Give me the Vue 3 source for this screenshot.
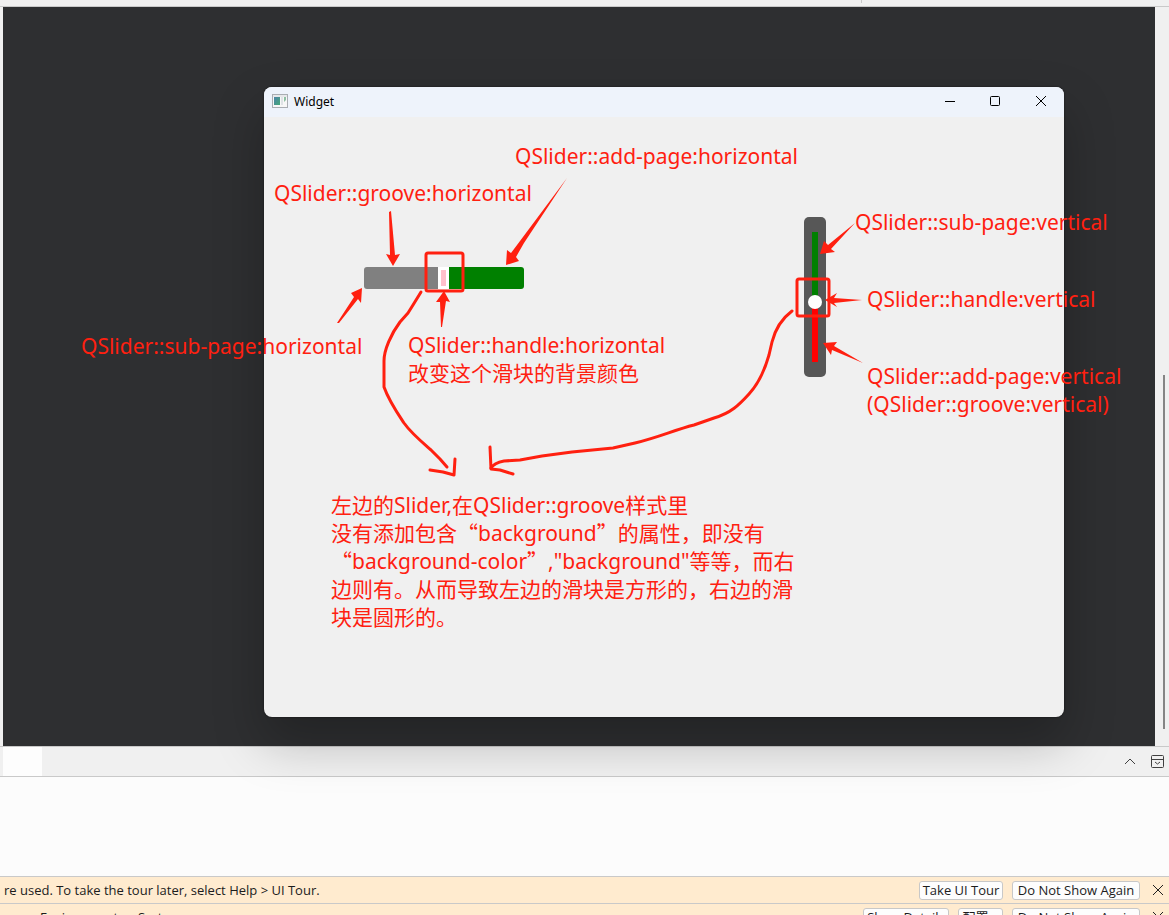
<script setup>
import { ref } from 'vue'

const horizontalValue = ref(74)
const verticalValue = ref(54)

const arrows = [
  'M389 212L391 211L395 255L400 254L393 266L386 254L390 255Z',
  'M567 178L520 241L511 253L507 250L506 265L519 261L516 257L524 243Z',
  'M337 323L354 297L351 293L362 288L361 303L358 299L339 323Z',
  'M441 327L440 302L436 302L444 291L450 302L446 301L442 327Z',
  'M855 223L828 245L824 241L820 254L835 252L831 249Z',
  'M862 300L834 303L837 307L825 300L837 293L834 298Z',
  'M863 363L834 346L837 342L823 343L831 355L832 350Z'
]
</script>

<template>
  <main class="screen">
    <div class="top-strip"></div>

    <section class="workspace">
      <div class="stage">
        <div class="window">
          <header class="titlebar">
            <svg class="app-icon" width="16" height="14" viewBox="0 0 16 14" aria-hidden="true">
              <defs>
                <linearGradient id="iconFill" x1="0" y1="0" x2="1" y2="1">
                  <stop offset="0" stop-color="#4e83a8" />
                  <stop offset="1" stop-color="#43a878" />
                </linearGradient>
              </defs>
              <rect x="0.5" y="0.5" width="15" height="13" fill="#f7f7f7" stroke="#a9adb2" />
              <path d="M1 2H15" stroke="#d5d8dc" />
              <rect x="2" y="3" width="6" height="8" fill="url(#iconFill)" />
              <rect x="9" y="3" width="2" height="8" fill="#dfe3e6" />
              <path d="M12 3H14V6L12 8Z" fill="#8dc0a2" />
            </svg>
            <span class="title">Widget</span>
            <div class="window-buttons">
              <button type="button" aria-label="Minimize">
                <svg width="12" height="12" viewBox="0 0 12 12"><path d="M2 6.5H12" /></svg>
              </button>
              <button type="button" aria-label="Maximize">
                <svg width="12" height="12" viewBox="0 0 12 12"><rect x="1.5" y="1.5" width="9" height="9" rx="1" /></svg>
              </button>
              <button type="button" aria-label="Close">
                <svg width="12" height="12" viewBox="0 0 12 12"><path d="M1 1L11 11M11 1L1 11" /></svg>
              </button>
            </div>
          </header>
          <div class="client">
            <input v-model="horizontalValue" class="slider-h" type="range" max="149" aria-label="QSlider horizontal" />
            <input v-model="verticalValue" class="slider-v" type="range" aria-label="QSlider vertical" />
          </div>
        </div>
      </div>
      <div class="gutter"><div class="scroll-thumb"></div></div>

      <svg class="ink" width="1169" height="739" viewBox="0 7 1169 739" aria-hidden="true">
        <path v-for="d in arrows" :key="d" :d="d" fill="#ff2010" />
        <g fill="none" stroke="#ff2010" stroke-width="3" stroke-linejoin="round">
          <rect x="426" y="253" width="37" height="38" rx="2" />
          <rect x="797" y="279" width="32" height="37" rx="2" />
          <g stroke-linecap="round">
            <path d="M421 292L413 305L408 313L400 322C391 334 384 350 384 361V387C389 401 396 411 404 423C411 433 423 443 431 450L440 459L447 467" />
            <path d="M430 470L443 472L454 475L455 459" />
            <path d="M792 311C780 320 775 330 772 342L769 355C765 369 760 382 749 394C739 405 731 413 714 418L694 425C674 430 660 437 635 443L613 448L572 452L542 456L520 460L504 461Q494 463 491 468" />
            <path d="M490 447L491 469L500 470L513 474" />
          </g>
        </g>
      </svg>

      <p class="note add-h">QSlider::add-page:horizontal</p>
      <p class="note groove-h">QSlider::groove:horizontal</p>
      <p class="note sub-h">QSlider::sub-page:horizontal</p>
      <p class="note handle-h">QSlider::handle:horizontal<br />改变这个滑块的背景颜色</p>
      <p class="note sub-v">QSlider::sub-page:vertical</p>
      <p class="note handle-v">QSlider::handle:vertical</p>
      <p class="note add-v">QSlider::add-page:vertical<br />(QSlider::groove:vertical)</p>
      <p class="note remark" lang="zh-CN">左边的Slider,在QSlider::groove样式里<br />没有添加包含<span class="cjk">“</span>background<span class="cjk">”</span>的属性，即没有<br /><span class="cjk">“</span>background-color<span class="cjk">”</span>,"background"等等，而右<br />边则有。从而导致左边的滑块是方形的，右边的滑<br />块是圆形的。</p>
    </section>

    <div class="pane-bar">
      <div class="pane-tab"></div>
      <button type="button" aria-label="Expand">
        <svg width="12" height="8" viewBox="0 0 12 8"><path d="M1 6L6 1L11 6" /></svg>
      </button>
      <button type="button" aria-label="Toggle pane">
        <svg width="14" height="14" viewBox="0 0 14 14"><rect x="0.5" y="0.5" width="12" height="12" rx="1" /><path d="M1 4.500H12M4 7L6.500 9L9 7" /></svg>
      </button>
    </div>
    <div class="pane"></div>

    <section class="alert">
      <p>re used. To take the tour later, select Help &gt; UI Tour.</p>
      <button class="push w-tour" type="button">Take UI Tour</button>
      <button class="push w-again" type="button">Do Not Show Again</button>
      <button class="dismiss" type="button" aria-label="Close">
        <svg width="12" height="12" viewBox="0 0 12 12"><path d="M1 1L11 11M11 1L1 11" /></svg>
      </button>
    </section>
    <section class="alert second">
      <p>Environment or System</p>
      <button class="push w-details" type="button">Show Details</button>
      <button class="push w-config" type="button">配置...</button>
      <button class="push w-again" type="button">Do Not Show Again</button>
      <button class="dismiss" type="button" aria-label="Close">
        <svg width="12" height="12" viewBox="0 0 12 12"><path d="M1 1L11 11M11 1L1 11" /></svg>
      </button>
    </section>
  </main>
</template>

<style>
body {
  margin: 0;
}
</style>

<style scoped>
.screen {
  height: 100vh;
  display: flex;
  flex-direction: column;
  overflow: hidden;
  background: #f0f0f0;
  color: #1c1c1c;
  font-family: "Noto Sans", "Noto Sans CJK SC", sans-serif;
  font-size: 12px;
}
p {
  margin: 0;
}
button {
  font: inherit;
  color: inherit;
  padding: 0;
  border: 0;
  background: none;
}
svg {
  display: block;
}
button svg {
  fill: none;
  stroke: #202020;
  stroke-width: 1;
}
.top-strip {
  flex: none;
  height: 6px;
  border-bottom: 1px solid #c9c9c9;
  background: linear-gradient(#c9c9c9, #c9c9c9) 861px 0 / 1px 3px no-repeat;
}
.workspace {
  position: relative;
  z-index: 1;
  flex: none;
  display: flex;
  padding-left: 3px;
}
.stage {
  flex: 1;
  padding: 80px 91px 29px 261px;
  background: #2e2f31;
}
.window {
  border-radius: 8px;
  background: #f0f0f0;
  box-shadow: 0 0 2px rgba(0, 0, 0, 0.6), 0 24px 50px rgba(0, 0, 0, 0.25);
}
.titlebar {
  display: flex;
  align-items: center;
  box-sizing: border-box;
  height: 30px;
  padding: 0 0 2px 8px;
  border-radius: 8px 8px 0 0;
  background: #eef3fb;
  color: #000;
}
.title {
  margin-left: 6px;
}
.window-buttons {
  display: flex;
  margin-left: auto;
}
.window-buttons button {
  display: grid;
  place-items: center;
  width: 46px;
  height: 28px;
}
.window-buttons svg {
  stroke: #000;
}
.client {
  display: flex;
  justify-content: space-between;
  align-items: flex-start;
  height: 500px;
  padding: 100px 238px 0 100px;
}
.slider-h,
.slider-v {
  appearance: none;
  box-sizing: border-box;
  margin: 0;
}
.slider-h {
  width: 160px;
  height: 22px;
  margin-top: 50px;
  border-radius: 3px;
  background: linear-gradient(90deg, #808080 50%, #008000 50%);
}
.slider-h::-webkit-slider-thumb {
  appearance: none;
  width: 11px;
  height: 22px;
  border: 3px solid #fff;
  background: #ffc0cb;
}
.slider-v {
  writing-mode: vertical-lr;
  width: 22px;
  height: 160px;
  padding: 15px 4px;
  border-radius: 5px;
  background: linear-gradient(#008000 54%, #f00 54%) center / 6px 130px no-repeat #575757;
}
.slider-v::-webkit-slider-thumb {
  appearance: none;
  width: 14px;
  height: 14px;
  border-radius: 50%;
  background: #fff;
}
.gutter {
  display: flex;
  flex-direction: column;
  align-items: flex-end;
  justify-content: flex-end;
  width: 14px;
  background: #f0f0f0;
  box-sizing: border-box;
  padding: 0 4px 17px 0;
}
.scroll-thumb {
  width: 2px;
  height: 49%;
  background: #858585;
}
.ink {
  position: absolute;
  left: 0;
  top: 0;
  pointer-events: none;
}
.note {
  position: absolute;
  color: #ff2010;
  font-size: 21px;
  line-height: 28px;
  white-space: nowrap;
}
.cjk {
  font-family: "Noto Sans CJK SC", sans-serif;
  line-height: 0;
}
.add-h { left: 515px; top: 135px; }
.groove-h { left: 274px; top: 172px; }
.sub-h { left: 81px; top: 325px; }
.handle-h { left: 408px; top: 324px; }
.sub-v { left: 855px; top: 201px; }
.handle-v { left: 867px; top: 278px; }
.add-v { left: 867px; top: 355px; }
.remark { left: 331px; top: 484px; }
.pane-bar {
  flex: none;
  display: flex;
  align-items: center;
  gap: 15px;
  height: 29px;
  padding: 0 4px 0 3px;
  border-top: 1px solid #c9c9c9;
  border-bottom: 1px solid #c9c9c9;
}
.pane-tab {
  align-self: stretch;
  width: 39px;
  margin-right: auto;
  background: #fdfdfd;
}
.pane-bar svg {
  stroke: #404040;
}
.pane {
  flex: none;
  height: 99px;
  background: #fcfcfc;
}
.alert {
  flex: none;
  display: flex;
  align-items: center;
  gap: 9px;
  height: 26px;
  padding: 0 5px 0 4px;
  border-top: 1px solid #c9c9c9;
  background: #ffebcf;
  font-family: "Open Sans", "Noto Sans CJK SC", sans-serif;
  font-size: 13px;
}
.alert p {
  margin-right: auto;
}
.alert.second {
  padding-left: 40px;
}
.push {
  box-sizing: border-box;
  height: 19px;
  border: 1px solid #c8c8c8;
  border-radius: 3px;
  background: #fdfdfd;
  line-height: 16px;
  white-space: nowrap;
}
.w-tour { width: 84px; }
.w-again { width: 128px; }
.w-details { width: 86px; }
.w-config { width: 45px; }
.dismiss {
  margin-left: 3px;
}
</style>
